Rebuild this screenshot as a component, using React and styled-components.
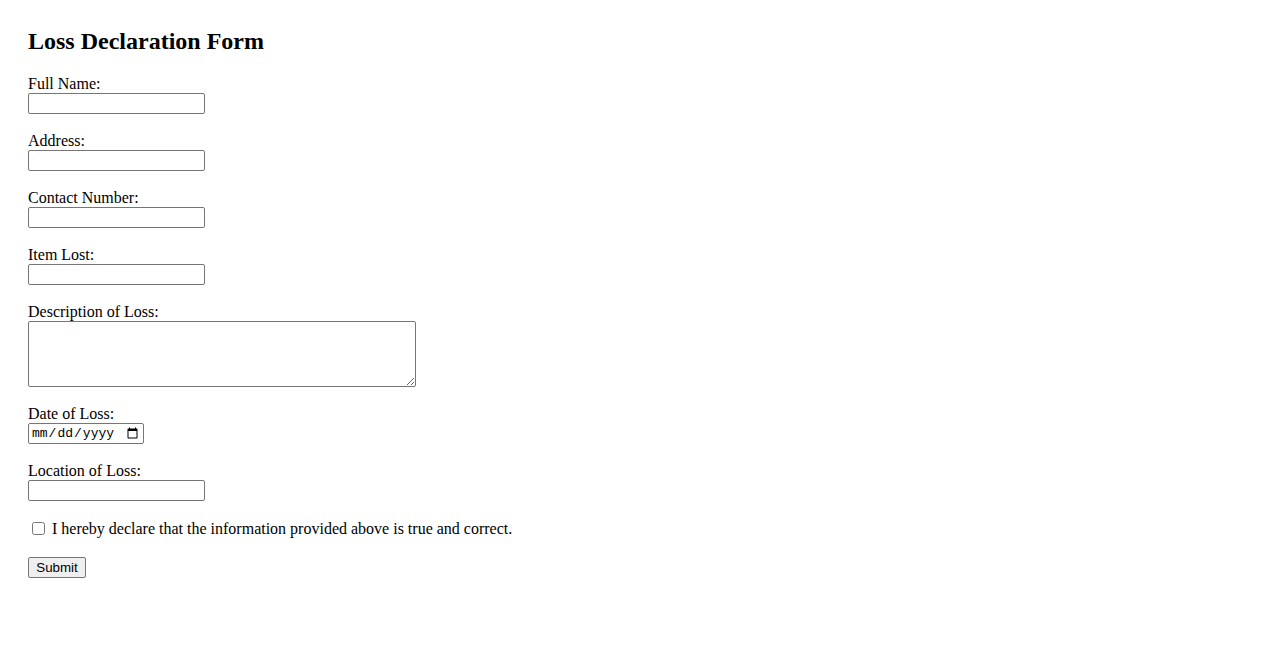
import React from "react";
import styled, { createGlobalStyle } from "styled-components";

const GlobalStyle = createGlobalStyle`
  body {
    margin: 0;
    background: #fff;
    color: #000;
    font-family: "Liberation Serif", "Times New Roman", serif;
    font-size: 16px;
  }
`;

const Page = styled.div`
  padding: 27px 28px 40px;
`;

const Title = styled.h2`
  margin: 0 0 19px;
  font-size: 24px;
  line-height: 28px;
  font-weight: bold;
`;

const Form = styled.form`
  display: flex;
  flex-direction: column;
  align-items: flex-start;
`;

const Field = styled.div`
  display: flex;
  flex-direction: column;
  align-items: flex-start;
  margin-bottom: 17px;
`;

const Label = styled.label`
  display: block;
  height: 19px;
  line-height: 19px;
`;

const TextInput = styled.input`
  box-sizing: border-box;
  width: ${({ $width }) => $width || 177}px;
  height: 21px;
  margin: 0;
  padding: 1px 2px;
  border: 1px solid #767676;
  border-radius: 2px;
  background: #fff;
  font-family: ${({ $mono }) =>
    $mono ? '"Liberation Mono", "DejaVu Sans Mono", monospace' : '"Liberation Sans", Arial, sans-serif'};
  font-size: 13px;
  color: #000;
`;

const TextArea = styled.textarea`
  box-sizing: border-box;
  width: 388px;
  height: 66px;
  margin: 0;
  padding: 2px;
  border: 1px solid #767676;
  border-radius: 2px;
  font-family: "Liberation Mono", monospace;
  font-size: 13px;
`;

const CheckRow = styled.div`
  display: flex;
  align-items: center;
  height: 19px;
  margin: 1px 0 19px;
`;

const CheckBox = styled.input`
  width: 13px;
  height: 13px;
  margin: 0 7px 0 4px;
`;

const SubmitButton = styled.button`
  box-sizing: border-box;
  width: 58px;
  height: 21px;
  padding: 1px 6px;
  border: 1px solid #767676;
  border-radius: 2px;
  background: #efefef;
  color: #000;
  font-family: "Liberation Sans", Arial, sans-serif;
  font-size: 13.33px;
  line-height: 17px;
`;

const fields = [
  { id: "fullName", label: "Full Name:" },
  { id: "address", label: "Address:" },
  { id: "contact", label: "Contact Number:" },
  { id: "item", label: "Item Lost:" },
];

export default function App() {
  return (
    <>
      <GlobalStyle />
      <Page>
        <Title>Loss Declaration Form</Title>
        <Form onSubmit={(e) => e.preventDefault()}>
          {fields.map((f) => (
            <Field key={f.id}>
              <Label htmlFor={f.id}>{f.label}</Label>
              <TextInput id={f.id} type="text" />
            </Field>
          ))}
          <Field>
            <Label htmlFor="description">Description of Loss:</Label>
            <TextArea id="description" />
          </Field>
          <Field>
            <Label htmlFor="date">Date of Loss:</Label>
            <TextInput id="date" type="date" $width={116} $mono />
          </Field>
          <Field>
            <Label htmlFor="location">Location of Loss:</Label>
            <TextInput id="location" type="text" />
          </Field>
          <CheckRow>
            <CheckBox id="declare" type="checkbox" />
            <label htmlFor="declare">
              I hereby declare that the information provided above is true and correct.
            </label>
          </CheckRow>
          <SubmitButton type="submit">Submit</SubmitButton>
        </Form>
      </Page>
    </>
  );
}
